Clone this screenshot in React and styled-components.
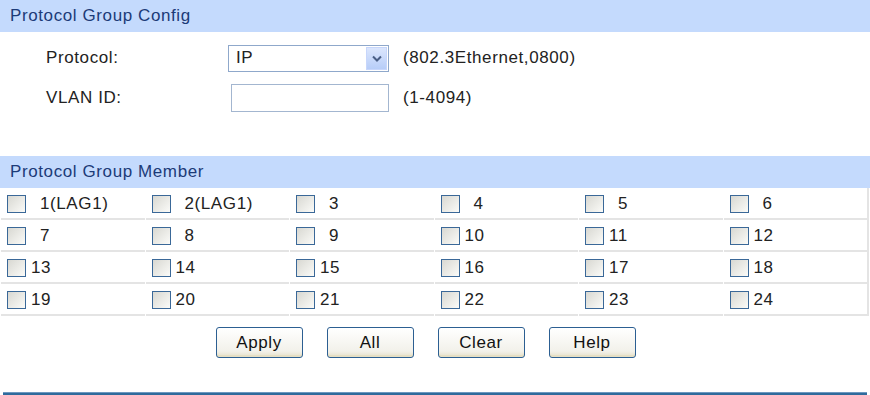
import styled, { createGlobalStyle } from "styled-components";

const GlobalStyle = createGlobalStyle`
  body {
    margin: 0;
    background: #ffffff;
    font-family: "Liberation Sans", Arial, sans-serif;
    font-size: 17px;
    letter-spacing: 0.6px;
    color: #222222;
  }
`;

const Page = styled.div`
  width: 870px;
  height: 395px;
  overflow: hidden;
  display: flex;
  flex-direction: column;

  & > * {
    flex-shrink: 0;
  }
`;

const SectionHead = styled.div`
  height: 32px;
  margin-top: ${(p) => p.$top || 0}px;
  padding-left: 10px;
  display: flex;
  align-items: center;
  background: #c4dafd;
  color: #1c3b78;
`;

const Form = styled.div`
  padding-top: 6px;
  display: flex;
  flex-direction: column;
`;

const FormRow = styled.div`
  height: 40px;
  display: flex;
  align-items: center;
`;

const Label = styled.div`
  width: 182px;
  padding-left: 46px;
`;

const SelectBox = styled.div`
  width: 161px;
  height: 27px;
  border: 1px solid #8fa8cb;
  display: flex;
  align-items: center;
  justify-content: space-between;
  padding: 0 1px 0 7px;
  box-sizing: border-box;
`;

const ArrowBtn = styled.div`
  width: 21px;
  height: 23px;
  display: flex;
  align-items: center;
  justify-content: center;
  background: linear-gradient(#dbe6fd, #b7cdf8);
  border: 1px solid #c7d6fb;
  box-sizing: border-box;
`;

const TextInput = styled.div`
  width: 158px;
  height: 28px;
  margin-left: 3px;
  border: 1px solid #a3b6d0;
  box-sizing: border-box;
`;

const Hint = styled.div`
  margin-left: 14px;
`;

const Grid = styled.div`
  width: 866px;
  display: grid;
  grid-template-columns: repeat(6, 1fr);
  column-gap: 1px;
  padding-left: 1px;
  border-right: 2px solid #e4e4e4;
`;

const Cell = styled.div`
  height: 32px;
  box-sizing: border-box;
  padding-top: 2px;
  padding-left: 6px;
  display: flex;
  align-items: center;
  border-bottom: 2px solid #e4e4e4;
`;

const Box = styled.span`
  width: 19px;
  height: 18px;
  box-sizing: border-box;
  border: 1px solid #3a6898;
  background: linear-gradient(135deg, #d8d8d2, #fbfbf8);
  flex-shrink: 0;
`;

const PortText = styled.span`
  margin-left: ${(p) => (p.$wide ? 14 : 5)}px;
`;

const Buttons = styled.div`
  display: flex;
  justify-content: center;
  gap: 24px;
  margin-top: 11px;
  padding-right: 19px;
`;

const Button = styled.button`
  width: 87px;
  height: 31px;
  font-family: inherit;
  font-size: 17px;
  letter-spacing: 0.6px;
  color: #111111;
  border: 1px solid #2c5f92;
  border-radius: 3px;
  background: linear-gradient(#ffffff, #f2f1ea 80%, #e6e0c8);
  box-shadow: inset 0 -2px 0 #e5dfc4;
  padding: 0;
`;

const BottomBar = styled.div`
  margin-top: 34px;
  margin-left: 3px;
  width: 864px;
  height: 4px;
  background: #2f6b9c;
  border-top: 1px solid #6d98c0;
`;

const ports = [
  "1(LAG1)", "2(LAG1)", "3", "4", "5", "6",
  "7", "8", "9", "10", "11", "12",
  "13", "14", "15", "16", "17", "18",
  "19", "20", "21", "22", "23", "24",
];

const App = () => {
  return (
    <Page>
      <GlobalStyle />
      <SectionHead>Protocol Group Config</SectionHead>
      <Form>
        <FormRow>
          <Label>Protocol:</Label>
          <SelectBox>
            <span>IP</span>
            <ArrowBtn>
              <svg width="10" height="7" viewBox="0 0 10 7">
                <path d="M1 1.5 L5 5.5 L9 1.5" fill="none" stroke="#4a5f86" strokeWidth="2" />
              </svg>
            </ArrowBtn>
          </SelectBox>
          <Hint>(802.3Ethernet,0800)</Hint>
        </FormRow>
        <FormRow>
          <Label>VLAN ID:</Label>
          <TextInput />
          <Hint>(1-4094)</Hint>
        </FormRow>
      </Form>
      <SectionHead $top={38}>Protocol Group Member</SectionHead>
      <Grid>
        {ports.map((p) => (
          <Cell key={p}>
            <Box />
            <PortText $wide={p.length !== 2}>{p}</PortText>
          </Cell>
        ))}
      </Grid>
      <Buttons>
        <Button>Apply</Button>
        <Button>All</Button>
        <Button>Clear</Button>
        <Button>Help</Button>
      </Buttons>
      <BottomBar />
    </Page>
  );
};

export default App;
